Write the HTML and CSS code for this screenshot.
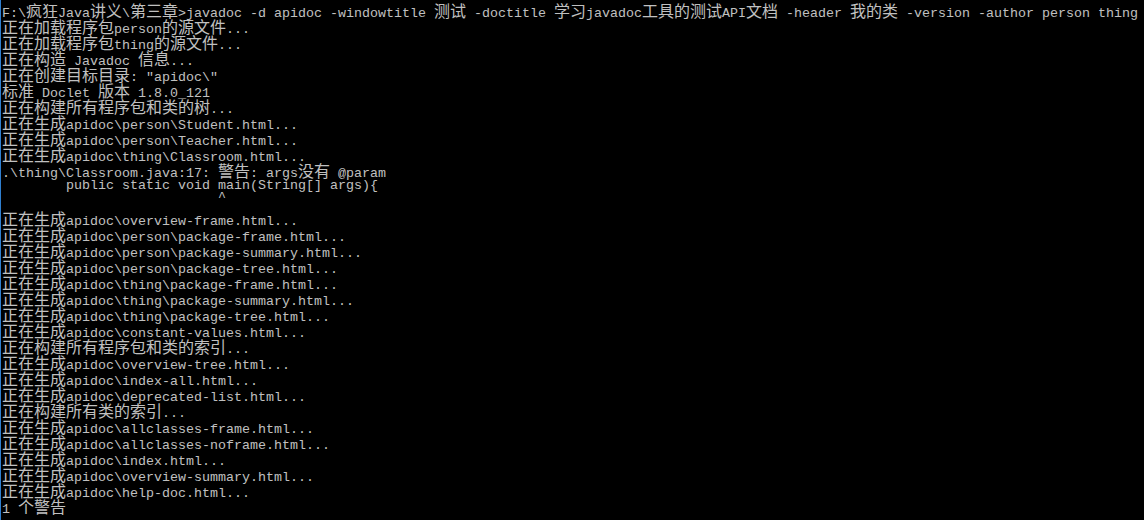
FILE: index.html
```html
<!DOCTYPE html>
<html lang="zh-CN">
<head>
    <meta charset="UTF-8">
    <meta name="viewport" content="width=device-width, initial-scale=1.0">
    <title>命令提示符 - javadoc</title>
    <link rel="stylesheet" href="styles.css">
</head>
<body>
    <div class="console">
        <div class="line">F:\<span class="cn">疯狂</span>Java<span class="cn">讲义</span>\<span class="cn">第三章</span>&gt;javadoc -d apidoc -windowtitle <span class="cn">测试</span> -doctitle <span class="cn">学习</span>javadoc<span class="cn">工具的测试</span>API<span class="cn">文档</span> -header <span class="cn">我的类</span> -version -author person thing</div>
        <div class="line"><span class="cn">正在加载程序包</span>person<span class="cn">的源文件</span>...</div>
        <div class="line"><span class="cn">正在加载程序包</span>thing<span class="cn">的源文件</span>...</div>
        <div class="line"><span class="cn">正在构造</span> Javadoc <span class="cn">信息</span>...</div>
        <div class="line"><span class="cn">正在创建目标目录</span>: "apidoc\"</div>
        <div class="line"><span class="cn">标准</span> Doclet <span class="cn">版本</span> 1.8.0_121</div>
        <div class="line"><span class="cn">正在构建所有程序包和类的树</span>...</div>
        <div class="line"><span class="cn">正在生成</span>apidoc\person\Student.html...</div>
        <div class="line"><span class="cn">正在生成</span>apidoc\person\Teacher.html...</div>
        <div class="line"><span class="cn">正在生成</span>apidoc\thing\Classroom.html...</div>
        <div class="line">.\thing\Classroom.java:17: <span class="cn">警告</span>: args<span class="cn">没有</span> @param</div>
        <div class="line">        public static void main(String[] args){</div>
        <div class="line caret">                           ^</div>
        <div class="line"><span class="cn">正在生成</span>apidoc\overview-frame.html...</div>
        <div class="line"><span class="cn">正在生成</span>apidoc\person\package-frame.html...</div>
        <div class="line"><span class="cn">正在生成</span>apidoc\person\package-summary.html...</div>
        <div class="line"><span class="cn">正在生成</span>apidoc\person\package-tree.html...</div>
        <div class="line"><span class="cn">正在生成</span>apidoc\thing\package-frame.html...</div>
        <div class="line"><span class="cn">正在生成</span>apidoc\thing\package-summary.html...</div>
        <div class="line"><span class="cn">正在生成</span>apidoc\thing\package-tree.html...</div>
        <div class="line"><span class="cn">正在生成</span>apidoc\constant-values.html...</div>
        <div class="line"><span class="cn">正在构建所有程序包和类的索引</span>...</div>
        <div class="line"><span class="cn">正在生成</span>apidoc\overview-tree.html...</div>
        <div class="line"><span class="cn">正在生成</span>apidoc\index-all.html...</div>
        <div class="line"><span class="cn">正在生成</span>apidoc\deprecated-list.html...</div>
        <div class="line"><span class="cn">正在构建所有类的索引</span>...</div>
        <div class="line"><span class="cn">正在生成</span>apidoc\allclasses-frame.html...</div>
        <div class="line"><span class="cn">正在生成</span>apidoc\allclasses-noframe.html...</div>
        <div class="line"><span class="cn">正在生成</span>apidoc\index.html...</div>
        <div class="line"><span class="cn">正在生成</span>apidoc\overview-summary.html...</div>
        <div class="line"><span class="cn">正在生成</span>apidoc\help-doc.html...</div>
        <div class="line">1 <span class="cn">个警告</span></div>
    </div>
</body>
</html>
```

FILE: styles.css
```css
* {
    margin: 0;
    padding: 0;
    box-sizing: border-box;
}

html, body {
    width: 100%;
    height: 100%;
    background: #000;
    overflow: hidden;
}

.console {
    height: 100%;
    padding: 3px 0 0 1px;
    border-left: 1px solid #2f7fd0;
    color: #c0c0c0;
    font-family: "Liberation Mono", monospace;
    font-size: 13.33px;
}

.line {
    height: 16px;
    line-height: 14px;
    white-space: pre;
}

.cn {
    font-family: "Noto Sans CJK SC", sans-serif;
    font-size: 16px;
    line-height: 14px;
}

/* the caret sits high in the console's raster font */
.caret {
    line-height: 6px;
}
```
